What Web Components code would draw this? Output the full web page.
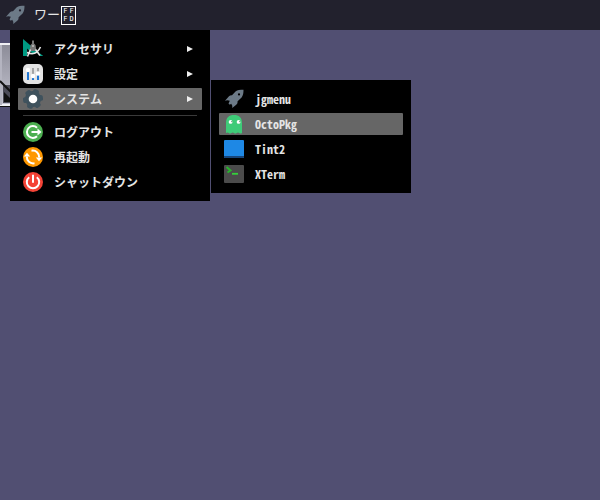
<!DOCTYPE html>
<html lang="ja">
<head>
<meta charset="utf-8">
<title>Desktop menu</title>
<style>
html,body{margin:0;min-height:100%;background:#514f72;}
body{font-family:"Noto Sans Mono CJK JP","Noto Sans CJK JP","DejaVu Sans Mono",monospace;color:#eee;overflow:hidden}
</style>
</head>
<body>
<desktop-shell>
  <top-panel slot="panel"></top-panel>
  <desktop-thumb slot="window"></desktop-thumb>
  <popup-menu slot="menu" label="メニュー">
    <menu-entry icon="tools" submenu>アクセサリ</menu-entry>
    <menu-entry icon="settings" submenu>設定</menu-entry>
    <menu-entry icon="gear" submenu selected>システム</menu-entry>
    <menu-rule></menu-rule>
    <menu-entry icon="logout">ログアウト</menu-entry>
    <menu-entry icon="restart">再起動</menu-entry>
    <menu-entry icon="power">シャットダウン</menu-entry>
  </popup-menu>
  <popup-menu slot="submenu" label="システム">
    <menu-entry icon="rocket">jgmenu</menu-entry>
    <menu-entry icon="octo" selected>OctoPkg</menu-entry>
    <menu-entry icon="tint">Tint2</menu-entry>
    <menu-entry icon="xterm">XTerm</menu-entry>
  </popup-menu>
</desktop-shell>
<script>
const ICONS = {
  rocket: `<path fill="#6c7a87" d="M19.5.8C16 .8 13.5 1 11.5 2.500L8 6.300Q6 6.200 5 7.300L1 11.700Q3.500 10.800 5.800 11.800L4.500 14.500 5.800 15.800 7.200 14.800Q8.800 16.500 8.300 19L12.500 15.500Q13.800 14.500 13.600 12.300L17.600 8.500C19.200 6.500 19.500 4 19.500.8z"/><circle cx="15" cy="5.400" r="1.100" fill="var(--icon-hole,#000)"/>`,
  tools: `<path fill="#009b83" d="M0 0v17h20z"/><path fill="#111" d="M4 9.500V14h5z"/><path fill="#000" d="M4 14h13v4H4z"/><path fill="#777" d="M9 1.500h2v3H9zM7.500 6l2.500-2.500L12.500 6l1 6h-7z"/><path fill="none" stroke="#e6e6e6" stroke-width="1.600" d="M4 13.500c5.500 2.500 10.500 1 13.500-5.500M7.500 10.500 4.500 17.500M12.500 10.500l4.500 6"/><circle cx="10" cy="7" r="1.100" fill="#bbb"/><path fill="#009b83" d="M17 15l3 2h-2z"/>`,
  settings: `<rect width="20" height="20" rx="5" fill="#e3e3e3"/><g stroke-width="2"><path stroke="#a5a5a5" d="M5 4v4M10 4v8M15 4v5"/><path stroke="#2176d2" d="M5 8v8M10 13v3M15 10v6"/></g><g fill="#fff"><circle cx="5" cy="6" r="2.2"/><circle cx="10" cy="12" r="2.2"/><circle cx="15" cy="9.5" r="2.2"/></g>`,
  gear: `<g fill="#3f525d"><circle cx="10" cy="10" r="8"/><rect x="7" width="6" height="20" rx="2" transform="rotate(22 10 10)"/><rect x="7" width="6" height="20" rx="2" transform="rotate(82 10 10)"/><rect x="7" width="6" height="20" rx="2" transform="rotate(142 10 10)"/></g><circle cx="10" cy="10" r="4.300" fill="#fff"/>`,
  logout: `<circle cx="10" cy="10" r="10" fill="#4caf50"/><path fill="none" stroke="#fff" stroke-width="2" d="M14 5.800A5.900 5.900 0 1 0 14 14.200M8.500 10h7"/><path fill="#fff" d="M14.500 6.600 18.500 10l-4 3.400z"/>`,
  restart: `<circle cx="10" cy="10" r="10" fill="#ff9800"/><path fill="none" stroke="#fff" stroke-width="2" d="M8.500 3.700C13 3 16.300 6 16.200 10.500M11.500 16.300C7 17 3.700 14 3.800 9.500"/><path fill="#fff" d="M12.800 10.500h6.400L16 14.200zM7.200 9.500H.8L4 5.800z"/>`,
  power: `<circle cx="10" cy="10" r="10" fill="#f44336"/><path fill="none" stroke="#fff" stroke-width="2" d="M6.200 5.200a6.200 6.200 0 1 0 7.600 0M10 2.800v8"/>`,
  octo: `<path fill="#3ecb78" d="M2 19V9C2 3.500 5 1 10 1S18 3.500 18 9v10q-1.500 1-2.800 0-1.200-1-2.500 0-1.300 1-2.700 0-1.300-1-2.600 0-1.300 1-2.600 0Q3.500 18 2 19z"/><g fill="#fff"><circle cx="6.600" cy="7.900" r="1.900"/><circle cx="14.600" cy="7.900" r="1.900"/></g><g fill="#487a5c"><circle cx="7.800" cy="7.600" r=".6"/><circle cx="15.800" cy="7.600" r=".6"/></g>`,
  tint: `<rect y="1" width="20" height="18" rx="1" fill="#1e88e5"/><path fill="#17457a" d="M0 17h20v1q0 1-1 1H1q-1 0-1-1z"/>`,
  xterm: `<rect y="1" width="20" height="18" rx="1" fill="#4b4b4b"/><path fill="none" stroke="#28b32e" stroke-width="2" d="M2.500 3 6.500 6.500 3.500 8.500"/><path stroke="#35d03b" stroke-width="1.800" d="M8 9.800h6"/>`
};

function define(name, html, setup) {
  const t = document.createElement('template');
  t.innerHTML = html;
  customElements.define(name, class extends HTMLElement {
    constructor() {
      super();
      this.attachShadow({mode: 'open'}).append(t.content.cloneNode(true));
    }
    connectedCallback() { if (setup) setup(this, this.shadowRoot); }
  });
}

define('app-icon', `<style>
:host{display:block;width:20px;height:20px;flex:none}
svg{display:block;width:100%;height:100%}
</style><svg viewBox="0 0 20 20" aria-hidden="true"></svg>`,
(el, root) => { root.querySelector('svg').innerHTML = ICONS[el.getAttribute('name')] || ''; });

define('hex-box', `<style>
:host{display:grid;grid-template-columns:auto auto;place-content:center;column-gap:2px;box-sizing:border-box;width:15px;height:19px;border:1px solid #fff;
font:7px/8px "DejaVu Sans Mono",monospace;color:#fff}
</style><span>F</span><span>F</span><span>F</span><span>D</span>`);

define('top-panel', `<style>
:host{display:block;background:#22212d}
nav{display:flex;align-items:center;height:30px;padding:0 5px}
button{all:unset;display:block}
.task{display:flex;align-items:center;gap:1px;margin-left:9px;font-size:13px;line-height:20px;color:#e6e6e6}
.task span{padding-bottom:2px}
app-icon{--icon-hole:#22212d}
</style><nav><button aria-label="jgmenu"><app-icon name="rocket"></app-icon></button>
<button class="task"><span>ワー</span><hex-box></hex-box></button></nav>`);

define('desktop-thumb', `<style>
:host{display:block;width:24px;height:64px}
svg{display:block}
</style><svg width="24" height="64" viewBox="0 0 24 64" aria-hidden="true">
<defs><linearGradient id="g" x2="0" y2="1"><stop stop-color="#8c8c98"/><stop offset="1" stop-color="#c4c4d0"/></linearGradient></defs>
<path fill="#f0f0f4" d="M0 0h24v63H0z"/><path fill="#b4b4c0" d="M0 2h2v60H0z"/>
<path fill="url(#g)" d="M2 2h22v59H2z"/><path fill="#4c4c58" d="M3 42h21v18H3z"/><path fill="#111" d="M4 49l7 7v3H4z"/><path stroke="#111" stroke-width="2" d="M0 38 24 62"/><path fill="#111" d="M0 63h24v1H0z"/></svg>`);

define('menu-rule', `<style>
:host{display:block;height:5px;padding:0 5px}
hr{margin:2px 0;border:0;border-top:1px solid #3a3a3a}
</style><hr>`);

define('menu-entry', `<style>
:host{display:block}
button{all:unset;box-sizing:border-box;display:flex;align-items:center;width:100%;height:22px;padding:0 5px;font-size:12px;line-height:20px;font-weight:700;color:#e4e4e4}
:host([selected]) button{background:#666;border-radius:1px}
.label{flex:1;margin-left:11px;padding-bottom:1px;white-space:nowrap}
.arrow{display:none;width:6px;height:6px;margin-right:4px;fill:#eee}
:host([submenu]) .arrow{display:block}
</style><button role="menuitem"><app-icon></app-icon><span class="label"><slot></slot></span><svg class="arrow" viewBox="0 0 6 6" aria-hidden="true"><path d="M0 0 6 3 0 6z"/></svg></button>`,
(el, root) => {
  const icon = document.createElement('app-icon');
  icon.setAttribute('name', el.getAttribute('icon'));
  root.querySelector('app-icon').replaceWith(icon);
  if (el.hasAttribute('submenu')) root.querySelector('button').setAttribute('aria-haspopup', 'menu');
});

define('popup-menu', `<style>
:host{display:block;width:200px;box-sizing:border-box;padding:8px;background:#000}
div{display:flex;flex-direction:column;gap:3px}
</style><div role="menu"><slot></slot></div>`,
(el, root) => root.querySelector('div').setAttribute('aria-label', el.getAttribute('label')));

define('desktop-shell', `<style>
:host{display:block;position:relative;min-height:100vh;background:#514f72}
.window,.menus{position:absolute}
.window{left:0;top:43px}
.menus{left:10px;top:30px;display:flex;align-items:flex-start;gap:1px}
.sub{margin-top:50px}
</style><slot name="panel"></slot><div class="window"><slot name="window"></slot></div>
<div class="menus"><slot name="menu"></slot><div class="sub"><slot name="submenu"></slot></div></div>`);
</script>
</body>
</html>
